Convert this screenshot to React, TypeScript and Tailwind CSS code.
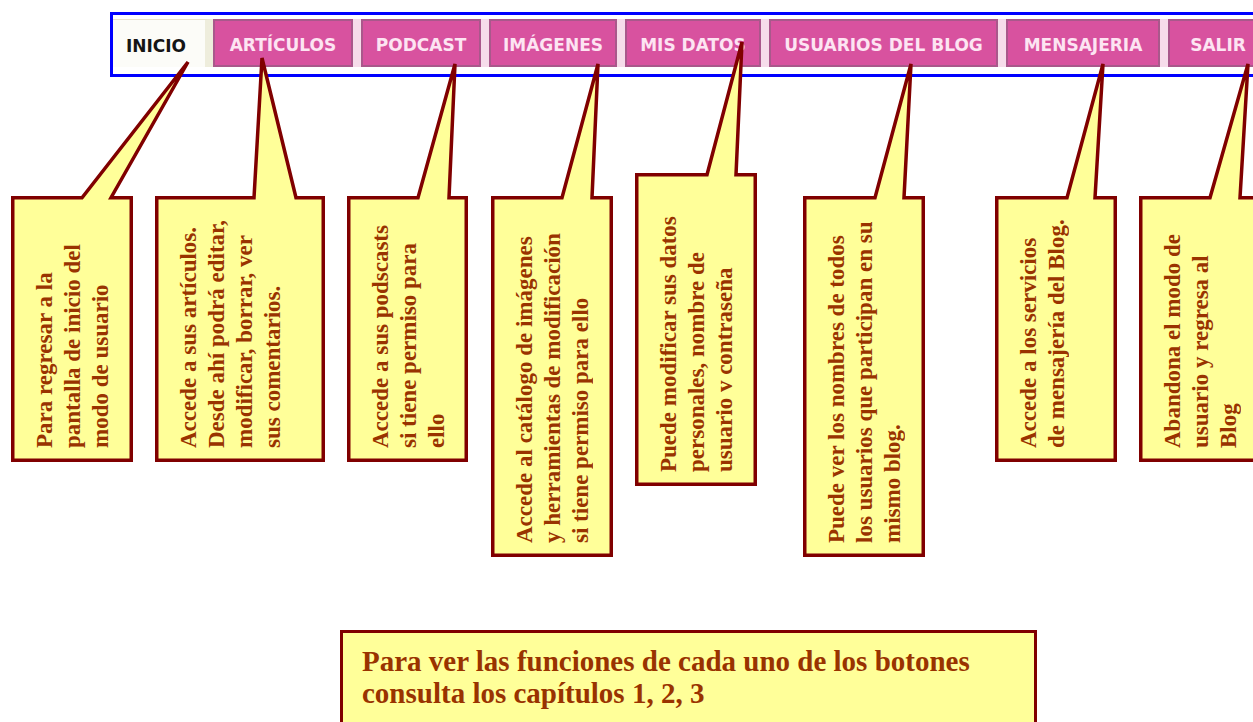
const tabs = [
  { label: "ARTÍCULOS", w: "w-[140px]" },
  { label: "PODCAST", w: "w-[120px]" },
  { label: "IMÁGENES", w: "w-[128px]" },
  { label: "MIS DATOS", w: "w-[136px]" },
  { label: "USUARIOS DEL BLOG", w: "w-[229px]" },
  { label: "MENSAJERIA", w: "w-[154px]" },
  { label: "SALIR", w: "w-[100px]" },
];

// box outer edges + tail base and tip, in page pixels
const callouts = [
  {
    box: [11, 196, 133, 462], tail: [82, 111, 188, 62],
    pos: "left-[31px] top-[206px] w-[84px] h-[242px]",
    lines: ["Para regresar a la", "pantalla de inicio del", "modo de usuario"],
  },
  {
    box: [155, 196, 325, 462], tail: [254, 296, 262, 58],
    pos: "left-[175px] top-[206px] w-[112px] h-[242px]",
    lines: ["Accede a sus artículos.", "Desde ahí podrá editar,", "modificar, borrar, ver", "sus comentarios."],
  },
  {
    box: [347, 196, 468, 462], tail: [418, 449, 455, 64],
    pos: "left-[367px] top-[206px] w-[84px] h-[242px]",
    lines: ["Accede a sus podscasts", "si tiene permiso para", "ello"],
  },
  {
    box: [491, 196, 613, 557], tail: [562, 592, 598, 64],
    pos: "left-[511px] top-[206px] w-[84px] h-[337px]",
    lines: ["Accede al catálogo de imágenes", "y herramientas de modificación", "si tiene permiso para ello"],
  },
  {
    box: [635, 173, 757, 486], tail: [707, 736, 742, 42],
    pos: "left-[655px] top-[183px] w-[84px] h-[289px]",
    lines: ["Puede modificar sus datos", "personales, nombre de", "usuario v contraseña"],
  },
  {
    box: [803, 196, 925, 557], tail: [875, 904, 911, 64],
    pos: "left-[823px] top-[206px] w-[84px] h-[337px]",
    lines: ["Puede ver los nombres de todos", "los usuarios que participan en su", "mismo blog."],
  },
  {
    box: [995, 196, 1117, 462], tail: [1067, 1095, 1103, 64],
    pos: "left-[1015px] top-[206px] w-[56px] h-[242px]",
    lines: ["Accede a los servicios", "de mensajería del Blog."],
  },
  {
    box: [1139, 196, 1262, 462], tail: [1210, 1240, 1248, 64],
    pos: "left-[1159px] top-[206px] w-[84px] h-[242px]",
    lines: ["Abandona el modo de", "usuario y regresa al", "Blog"],
  },
];

const outline = (box: number[], tail: number[]) => {
  const i = 1.75;
  const [x1, y1, x2, y2] = [box[0] + i, box[1] + i, box[2] - i, box[3] - i];
  const [bl, br, tx, ty] = tail;
  return `${x1},${y1} ${bl},${y1} ${tx},${ty} ${br},${y1} ${x2},${y1} ${x2},${y2} ${x1},${y2}`;
};

export default function App() {
  return (
    <div className="relative h-[722px] w-[1253px] overflow-hidden bg-white">
      {/* top menu */}
      <nav className="ml-[110px] mt-[12px] flex h-[65px] w-[1180px] border-[3px] border-[#0000ff] bg-white pt-[4px]">
        <div className="flex h-[48px] bg-[#f6dcea]">
          <div className="flex h-[48px] w-[100px] shrink-0 items-center justify-center border-r-[8px] border-t border-r-[#eeeddc] border-t-[#e9e2cc] bg-[#fcfcf8] pr-[6px] pt-[6px] font-['DejaVu_Sans',sans-serif] text-[17px] font-bold text-[#151515]">
            INICIO
          </div>
          <div className="flex gap-[8px]">
            {tabs.map((t) => (
              <div
                key={t.label}
                className={`flex h-[48px] ${t.w} shrink-0 items-center justify-center border-2 border-[#a9588b] bg-[#d8529f] pt-[5px] font-['DejaVu_Sans',sans-serif] text-[17px] font-bold text-[#fde4f2]`}
              >
                {t.label}
              </div>
            ))}
          </div>
        </div>
      </nav>

      {/* note */}
      <div className="ml-[340px] mt-[553px] h-[120px] w-[697px] border-[3px] border-[#800000] bg-[#ffff99] pl-[19px] pt-[12px] font-['Liberation_Serif',serif] text-[29px] font-bold leading-[32px] text-[#993300]">
        Para ver las funciones de cada uno de los botones
        <br />
        consulta los capítulos 1, 2, 3
      </div>

      {/* callout shapes */}
      <svg className="pointer-events-none absolute left-0 top-0" width="1253" height="722" viewBox="0 0 1253 722">
        {callouts.map((c, idx) => (
          <polygon
            key={idx}
            points={outline(c.box, c.tail)}
            fill="#ffff99"
            stroke="#800000"
            strokeWidth="3.5"
            strokeLinejoin="miter"
          />
        ))}
      </svg>

      {callouts.map((c, idx) => (
        <div
          key={idx}
          className={`absolute ${c.pos} rotate-180 whitespace-nowrap font-['Liberation_Serif',serif] text-[23px] font-bold leading-[28px] text-[#993300] [writing-mode:vertical-rl]`}
        >
          {c.lines.map((l, j) => (
            <span key={j}>
              {l}
              {j < c.lines.length - 1 && <br />}
            </span>
          ))}
        </div>
      ))}
    </div>
  );
}
